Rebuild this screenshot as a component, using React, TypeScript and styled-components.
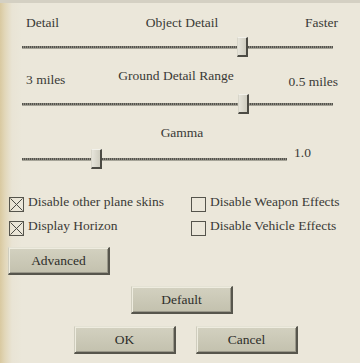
import React from 'react';
import styled, { createGlobalStyle } from 'styled-components';

const GlobalStyle = createGlobalStyle`
  html, body {
    margin: 0;
    padding: 0;
    background: #ebe7da;
    font-family: "Liberation Serif", "DejaVu Serif", serif;
  }
`;

type SliderProps = {
  width: number;
  thumb: number;
};

const Slider: React.FC<SliderProps> = ({ width, thumb }) => (
  <DivSlider $width={width}>
    <DivTrack />
    <DivThumb style={{ left: thumb }} />
  </DivSlider>
);

type CheckProps = {
  label: string;
  checked?: boolean;
};

const Check: React.FC<CheckProps> = ({ label, checked }) => (
  <DivCheckItem>
    <DivBox>
      {checked && (
        <svg width="13" height="13" viewBox="0 0 13 13">
          <path d="M0.5 0.5 L12.5 12.5 M12.5 0.5 L0.5 12.5" stroke="#4a4a44" strokeWidth="1" fill="none" />
        </svg>
      )}
    </DivBox>
    <SpanText>{label}</SpanText>
  </DivCheckItem>
);

const App: React.FC = () => {
  return (
    <>
      <GlobalStyle />
      <DivPanel>
        <DivLabelRow $top={12}>
          <SpanLabel>Detail</SpanLabel>
          <SpanTitle>Object Detail</SpanTitle>
          <SpanLabel $end>Faster</SpanLabel>
        </DivLabelRow>
        <DivSliderRow $top={7}>
          <Slider width={311} thumb={215} />
        </DivSliderRow>

        <DivLabelRow $top={11}>
          <SpanLabel $drop={4}>3 miles</SpanLabel>
          <SpanTitle $shift={12}>Ground Detail Range</SpanTitle>
          <SpanLabel $end $drop={6}>0.5 miles</SpanLabel>
        </DivLabelRow>
        <DivSliderRow $top={5}>
          <Slider width={311} thumb={216} />
        </DivSliderRow>

        <DivLabelRow $top={11}>
          <span />
          <SpanTitle>Gamma</SpanTitle>
          <span />
        </DivLabelRow>
        <DivSliderRow $top={9}>
          <Slider width={265} thumb={69} />
          <SpanValue>1.0</SpanValue>
        </DivSliderRow>

        <DivChecks>
          <Check checked label="Disable other plane skins" />
          <Check label="Disable Weapon Effects" />
          <Check checked label="Display Horizon" />
          <Check label="Disable Vehicle Effects" />
        </DivChecks>

        <DivButtonRow $top={11} $left={8}>
          <Button>Advanced</Button>
        </DivButtonRow>
        <DivButtonRow $top={11} $left={131}>
          <Button>Default</Button>
        </DivButtonRow>
        <DivButtonRow $top={12} $left={74}>
          <Button>OK</Button>
          <Button>Cancel</Button>
        </DivButtonRow>
      </DivPanel>
    </>
  );
};

const DivPanel = styled.div`
  position: relative;
  width: 360px;
  height: 363px;
  box-sizing: border-box;
  overflow: hidden;
  display: flex;
  flex-direction: column;
  font-family: "Liberation Serif", "DejaVu Serif", serif;
  font-size: 13.5px;
  line-height: 15px;
  color: #3a3a36;
  border-top: 3px solid #d4d0c3;
  background:
    linear-gradient(90deg, #d9c9a0 0px, #e2d7b9 5px, #e9e4d5 12px, rgba(235, 231, 218, 0) 22px),
    #ebe7da;
`;

const DivLabelRow = styled.div<{ $top: number }>`
  margin-top: ${(p) => p.$top}px;
  padding: 0 22px 0 26px;
  display: grid;
  grid-template-columns: 1fr auto 1fr;
  align-items: start;
`;

const SpanLabel = styled.span<{ $end?: boolean; $drop?: number }>`
  justify-self: ${(p) => (p.$end ? 'end' : 'start')};
  padding-top: ${(p) => p.$drop ?? 0}px;
  white-space: nowrap;
`;

const SpanTitle = styled.span<{ $shift?: number }>`
  margin-right: ${(p) => p.$shift ?? 0}px;
  white-space: nowrap;
`;

const DivSliderRow = styled.div<{ $top: number }>`
  margin-top: ${(p) => p.$top}px;
  padding-left: 22px;
  display: flex;
  align-items: flex-start;
  gap: 7px;
`;

const DivSlider = styled.div<{ $width: number }>`
  position: relative;
  width: ${(p) => p.$width}px;
  height: 20px;
  display: flex;
  align-items: center;
`;

const DivTrack = styled.div`
  width: 100%;
  height: 3px;
  background: repeating-linear-gradient(90deg, #55544e 0 1px, #8c8a80 1px 2px);
  border-bottom: 1px solid #a6a498;
  box-sizing: border-box;
`;

const DivThumb = styled.div`
  position: absolute;
  top: 0;
  width: 11px;
  height: 20px;
  box-sizing: border-box;
  background: linear-gradient(90deg, #e6e4da, #cfcdc0);
  border-style: solid;
  border-width: 1px 2px 2px 1px;
  border-color: #f2f1ea #4c4b44 #4c4b44 #d8d6ca;
`;

const SpanValue = styled.span`
  margin-top: -4px;
`;

const DivChecks = styled.div`
  margin-top: 25px;
  padding-left: 9px;
  display: grid;
  grid-template-columns: 182px auto;
  row-gap: 6px;
`;

const DivCheckItem = styled.div`
  display: flex;
  align-items: flex-start;
  gap: 4px;
`;

const DivBox = styled.div`
  margin-top: 3px;
  width: 15px;
  height: 15px;
  box-sizing: border-box;
  border: 1px solid #55544c;
  display: flex;
`;

const SpanText = styled.span`
  white-space: nowrap;
`;

const DivButtonRow = styled.div<{ $top: number; $left: number }>`
  margin-top: ${(p) => p.$top}px;
  padding-left: ${(p) => p.$left}px;
  display: flex;
  gap: 20px;
`;

const Button = styled.button`
  width: 102px;
  height: 28px;
  box-sizing: border-box;
  padding: 0;
  font-family: "Liberation Serif", "DejaVu Serif", serif;
  font-size: 13.5px;
  color: #2e2e2a;
  background: linear-gradient(180deg, #d3d1c0, #c3c1ae);
  border-style: solid;
  border-width: 1px 2px 2px 1px;
  border-color: #e4e2d4 #57564d #57564d #cfcdbe;
  box-shadow: inset 1px 1px 0 #eeecdf, inset -1px -1px 0 #9a988a;
`;

export default App;
